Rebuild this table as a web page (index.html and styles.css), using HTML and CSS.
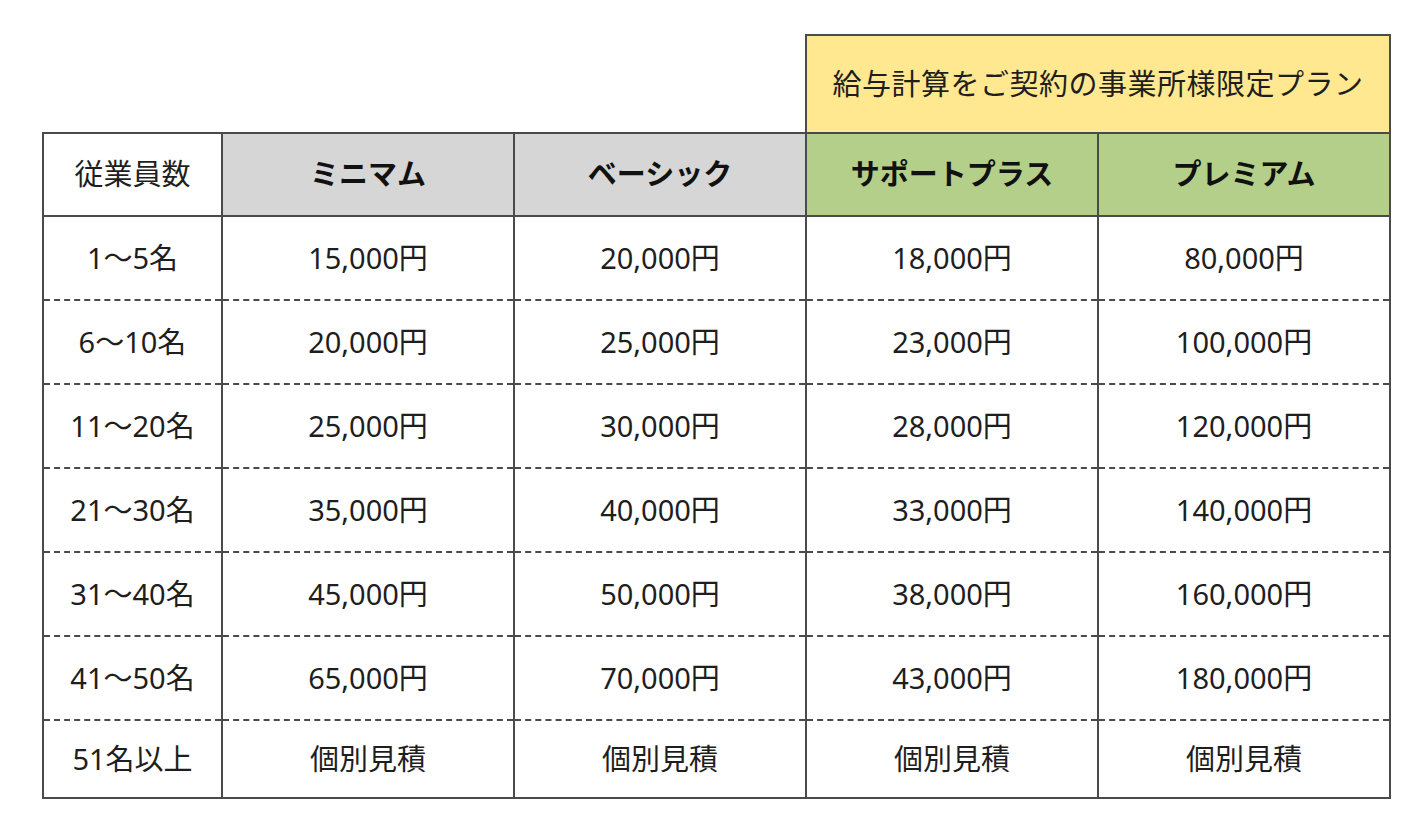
FILE: index.html
```html
<!DOCTYPE html>
<html lang="ja">
<head>
<meta charset="utf-8">
<title>料金表</title>
<link rel="stylesheet" href="styles.css">
</head>
<body>
<div class="page">
<table class="price">
  <colgroup>
    <col class="c-emp">
    <col class="c-plan">
    <col class="c-plan">
    <col class="c-plan">
    <col class="c-plan">
  </colgroup>
  <thead>
    <tr class="row-note">
      <th class="blank"></th>
      <th class="blank"></th>
      <th class="blank"></th>
      <th class="note" colspan="2">給与計算をご契約の事業所様限定プラン</th>
    </tr>
    <tr class="row-head">
      <th class="h-emp">従業員数</th>
      <th class="h-grey">ミニマム</th>
      <th class="h-grey">ベーシック</th>
      <th class="h-green">サポートプラス</th>
      <th class="h-green">プレミアム</th>
    </tr>
  </thead>
  <tbody>
    <tr><td>1～5名</td><td>15,000円</td><td>20,000円</td><td>18,000円</td><td>80,000円</td></tr>
    <tr><td>6～10名</td><td>20,000円</td><td>25,000円</td><td>23,000円</td><td>100,000円</td></tr>
    <tr><td>11～20名</td><td>25,000円</td><td>30,000円</td><td>28,000円</td><td>120,000円</td></tr>
    <tr><td>21～30名</td><td>35,000円</td><td>40,000円</td><td>33,000円</td><td>140,000円</td></tr>
    <tr><td>31～40名</td><td>45,000円</td><td>50,000円</td><td>38,000円</td><td>160,000円</td></tr>
    <tr><td>41～50名</td><td>65,000円</td><td>70,000円</td><td>43,000円</td><td>180,000円</td></tr>
    <tr class="row-last"><td>51名以上</td><td>個別見積</td><td>個別見積</td><td>個別見積</td><td>個別見積</td></tr>
  </tbody>
</table>
</div>
</body>
</html>
```
FILE: styles.css
```css
html, body {
  margin: 0;
  padding: 0;
  background: #ffffff;
}

.page {
  padding: 34px 0 0 42px;
  font-family: "Noto Sans", "Noto Sans CJK JP", sans-serif;
  color: #1e1e1e;
}

.price {
  border-collapse: collapse;
  table-layout: fixed;
  width: 1347px;
}

.c-emp { width: 179px; }
.c-plan { width: 292px; }

.price th,
.price td {
  border: 2px solid #4a4a4a;
  text-align: center;
  vertical-align: middle;
  padding: 0;
  font-size: 29px;
  line-height: 1.2;
}

.price th {
  font-weight: 400;
}

.price .blank {
  border: none;
  background: transparent;
}

.row-note { height: 98px; }
.row-head { height: 83px; }

.note {
  background: #ffe88f;
  font-size: 28px;
  letter-spacing: 0.5px;
}

.h-emp {
  background: #ffffff;
}

.price .h-grey {
  background: #d6d6d6;
  font-weight: 700;
  color: #111111;
}

.price .h-green {
  background: #b3cf89;
  font-weight: 700;
  color: #111111;
}

.price tbody tr {
  height: 84px;
}

.price tbody td {
  border-bottom: 2px dashed #4a4a4a;
}

.price tbody tr + tr td {
  border-top: 2px dashed #4a4a4a;
}

.price tbody tr.row-last {
  height: 78px;
}

.price tbody tr.row-last td {
  border-bottom: 2px solid #4a4a4a;
}
```
